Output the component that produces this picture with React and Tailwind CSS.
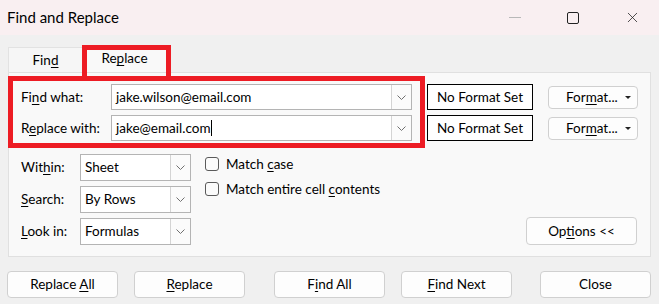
import { X } from "lucide-react"

const font = { fontFamily: 'Lato, "Noto Sans", sans-serif' }

const Chevron = () => (
  <svg width="9" height="5" viewBox="0 0 9 5" className="text-[#707070]">
    <polyline points="0.5,0.5 4.5,4.5 8.5,0.5" fill="none" stroke="currentColor" strokeWidth="1" />
  </svg>
)

const Combo = ({ value, className = "", cursor = false }) => (
  <div className={`flex bg-white border border-[#b4b4b4] ${className}`}>
    <div className="flex-1 flex items-center pl-[4px] text-[13.5px] text-black">
      <span>{value}</span>
      {cursor && <span className="w-px h-[16px] bg-black ml-[1px]"></span>}
    </div>
    <div className="w-[20px] border-l border-[#d4d4d4] bg-[#fbfbfb] flex items-center justify-center">
      <Chevron />
    </div>
  </div>
)

const U = ({ children }) => <span className="underline underline-offset-2 decoration-1">{children}</span>

const Btn = ({ children, className = "" }) => (
  <button className={`h-[27px] w-[111px] rounded-[4px] bg-[#fdfdfd] border border-[#d0d0d0] text-[13.5px] text-black flex items-center justify-center ${className}`}>
    <span>{children}</span>
  </button>
)

const NoFormat = () => (
  <div className="w-[106px] h-[26px] border border-black bg-white flex items-center justify-center text-[13.5px] text-black">
    No Format Set
  </div>
)

const FormatBtn = () => (
  <div className="w-[90px] h-[23px] rounded-[4px] border border-[#d0d0d0] bg-[#fdfdfd] flex items-center text-[13.5px] text-black">
    <span className="ml-[17px]">For<U>m</U>at...</span>
    <svg width="6" height="3" viewBox="0 0 6 3" className="ml-auto mr-[6px]">
      <polygon points="0,0 6,0 3,3" fill="#222" />
    </svg>
  </div>
)

const Check = ({ children }) => (
  <div className="flex items-center h-[14px]">
    <div className="w-[14px] h-[14px] rounded-[3px] border border-[#5a5a5a] bg-[#fbfbfb]"></div>
    <span className="ml-[7px] text-[13.5px] text-black">{children}</span>
  </div>
)

export default function App() {
  return (
    <div className="w-[659px] h-[304px] bg-[#f0f0f0] relative overflow-hidden select-none" style={font}>
      {/* title bar */}
      <div className="h-[35px] bg-[#f9eff1] flex items-center">
        <span className="ml-[7px] text-[15px] text-black">Find and Replace</span>
        <div className="ml-auto flex items-center">
          <div className="w-[12px] h-px bg-[#b8b8b8] mr-[46px]"></div>
          <div className="w-[12px] h-[12px] border border-[#222] rounded-[2px] mr-[45px]"></div>
          <X className="w-[17px] h-[17px] mr-[18px] text-[#222]" strokeWidth={1.1} />
        </div>
      </div>

      {/* tabs */}
      <div className="flex items-end h-[37px] ml-[8px]">
        <div className="w-[74px] h-[25px] bg-[#f6f6f6] border-t border-l border-[#e2e2e2] flex items-center justify-center text-[13.5px] text-black">
          <span>Fin<U>d</U></span>
        </div>
        <div className="w-[85px] h-[27px] bg-[#f9f9f9] flex items-center justify-center text-[13.5px] text-black">
          <span>Re<U>p</U>lace</span>
        </div>
      </div>

      {/* panel */}
      <div className="ml-[8px] w-[643px] h-[185px] border border-[#e0e0e0] bg-[#f9f9f9] px-[12px] pt-[11px]">
        <div className="flex items-center h-[26px]">
          <span className="w-[90px] text-[13.5px] text-black">Fi<U>n</U>d what:</span>
          <Combo value="jake.wilson@email.com" className="w-[301px] h-[26px]" />
          <div className="ml-[15px]"><NoFormat /></div>
          <div className="ml-[15px]"><FormatBtn /></div>
        </div>
        <div className="flex items-center h-[26px] mt-[5px]">
          <span className="w-[90px] text-[13.5px] text-black">R<U>e</U>place with:</span>
          <Combo value="jake@email.com" cursor className="w-[301px] h-[26px]" />
          <div className="ml-[15px]"><NoFormat /></div>
          <div className="ml-[15px]"><FormatBtn /></div>
        </div>

        <div className="flex mt-[13px]">
          <div className="flex flex-col gap-[5px]">
            <div className="flex items-center h-[27px]">
              <span className="w-[59px] text-[13.5px] text-black">Wit<U>h</U>in:</span>
              <Combo value="Sheet" className="w-[111px] h-[27px]" />
            </div>
            <div className="flex items-center h-[27px]">
              <span className="w-[59px] text-[13.5px] text-black"><U>S</U>earch:</span>
              <Combo value="By Rows" className="w-[111px] h-[27px]" />
            </div>
            <div className="flex items-center h-[27px]">
              <span className="w-[59px] text-[13.5px] text-black"><U>L</U>ook in:</span>
              <Combo value="Formulas" className="w-[111px] h-[27px]" />
            </div>
          </div>
          <div className="flex flex-col gap-[11px] ml-[14px] mt-[3px]">
            <Check>Match <U>c</U>ase</Check>
            <Check>Match entire cell <U>c</U>ontents</Check>
          </div>
          <div className="ml-auto self-end mr-[1px]">
            <Btn className="w-[110px] h-[28px]">
              Op<U>t</U>ions &lt;&lt;
            </Btn>
          </div>
        </div>
      </div>

      {/* bottom buttons */}
      <div className="flex mt-[14px] ml-[7px]">
        <Btn>Replace <U>A</U>ll</Btn>
        <Btn className="ml-[16px]"><U>R</U>eplace</Btn>
        <Btn className="ml-[29px]">F<U>i</U>nd All</Btn>
        <Btn className="ml-[16px] border-[#0067c0]"><U>F</U>ind Next</Btn>
        <Btn className="ml-[28px]">Close</Btn>
      </div>

      {/* red annotation boxes */}
      <div className="absolute left-[82px] top-[45px] w-[89px] h-[36px] border-[5px] border-b-0 border-[#ed1c24]"></div>
      <div className="absolute left-[8px] top-[76px] w-[417px] h-[72px] border-[5px] border-[#ed1c24]"></div>
    </div>
  )
}
